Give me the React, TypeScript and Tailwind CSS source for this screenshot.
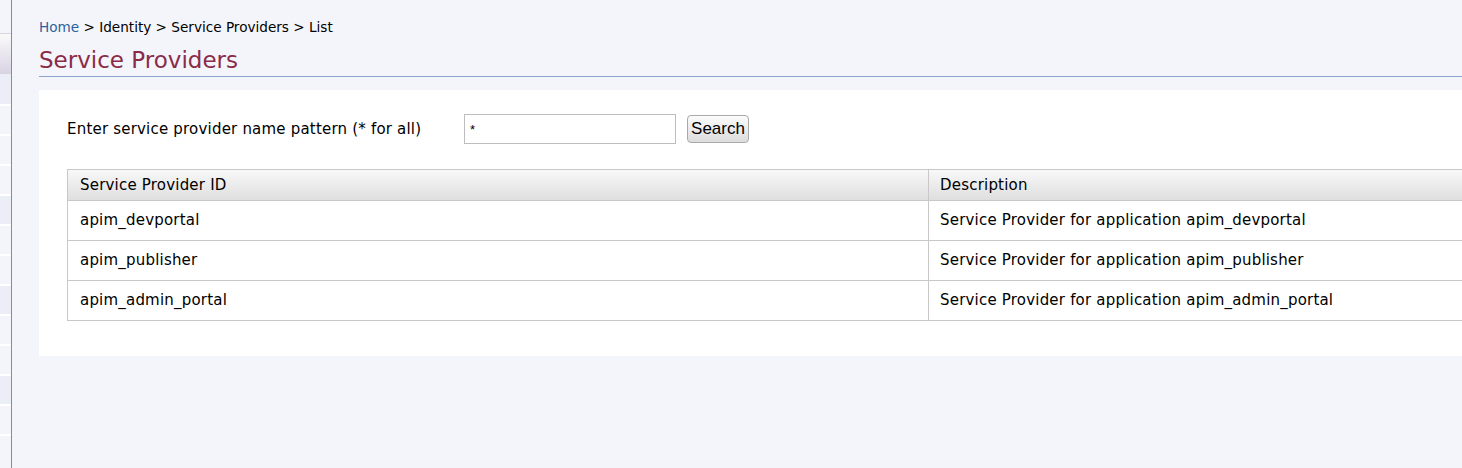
const rows = [
  { id: "apim_devportal", desc: "Service Provider for application apim_devportal" },
  { id: "apim_publisher", desc: "Service Provider for application apim_publisher" },
  { id: "apim_admin_portal", desc: "Service Provider for application apim_admin_portal" },
];

const sideRows = [false, false, false, true, false, false, true, false, false, true, false, false];

export default function App() {
  return (
    <div className="flex h-[468px] w-[1462px] overflow-hidden bg-[#f4f5fa] font-['DejaVu_Sans',sans-serif] text-black">
      {/* left menu strip, mostly cut off */}
      <div className="flex w-[12px] shrink-0 flex-col border-r border-[#8c9a3c] bg-[#f4f5fa]">
        <div className="h-[33px]" />
        <div className="h-[41px] border-y border-[#d6d6dc] bg-gradient-to-b from-[#fafafa] to-[#d9d4e4]" />
        <div className="h-[30px] bg-[#eceef7]" />
        {sideRows.map((dark, i) => (
          <div key={i} className={`h-[30px] border-t-2 border-white ${dark ? "bg-[#eceef7]" : "bg-[#f4f5fa]"}`} />
        ))}
      </div>

      <div className="flex min-w-0 flex-1 flex-col pl-[27px] pt-[18px]">
        <div className="text-[13.6px] leading-[18px]">
          <span className="text-[#2c5da0]">Home</span>
          <span> &gt; Identity &gt; Service Providers &gt; List</span>
        </div>
        <h1 className="mt-[9px] border-b border-[#8fa3cf] pb-[1px] text-[23px] leading-[30px] text-[#8a2c48]">
          Service Providers
        </h1>

        <div className="mt-[13px] w-[1500px] bg-white pb-[35px] pl-[28px] pt-[24px] text-[15px] tracking-[0.2px]">
          <div className="flex items-center">
            <span className="w-[397px]">Enter service provider name pattern (* for all)</span>
            <input
              defaultValue="*"
              className="h-[30px] w-[212px] border border-[#bdbdbd] bg-white px-[5px] font-['Liberation_Sans',sans-serif] text-[13px] tracking-normal outline-none"
            />
            <button className="ml-[11px] h-[28px] w-[62px] rounded-[4px] border border-[#a9a9a9] bg-gradient-to-b from-[#fbfbfb] to-[#dcdcdc] font-['Liberation_Sans',sans-serif] text-[17px] leading-[26px] tracking-normal text-black">
              Search
            </button>
          </div>

          <table className="mt-[25px] w-[1460px] border-collapse">
            <thead>
              <tr className="bg-gradient-to-b from-[#f8f8f8] to-[#dedede]">
                <th className="h-[31px] w-[861px] border border-[#c8c8c8] px-[12px] text-left font-normal">Service Provider ID</th>
                <th className="h-[31px] border border-[#c8c8c8] px-[11px] text-left font-normal">Description</th>
              </tr>
            </thead>
            <tbody>
              {rows.map((r) => (
                <tr key={r.id}>
                  <td className="h-[40px] border border-[#c8c8c8] px-[12px]">{r.id}</td>
                  <td className="h-[40px] border border-[#c8c8c8] px-[11px]">{r.desc}</td>
                </tr>
              ))}
            </tbody>
          </table>
        </div>
      </div>
    </div>
  );
}
